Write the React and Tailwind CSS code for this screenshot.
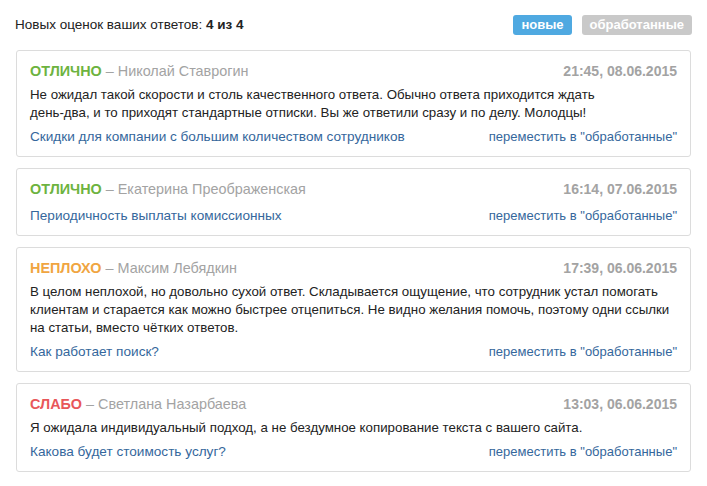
const REVIEWS = [
  {
    id: 1,
    grade: "ОТЛИЧНО",
    gradeClass: "text-[#6db33f]",
    author: "Николай Ставрогин",
    date: "21:45, 08.06.2015",
    text: "Не ожидал такой скорости и столь качественного ответа. Обычно ответа приходится ждать\nдень-два, и то приходят стандартные отписки. Вы же ответили сразу и по делу. Молодцы!",
    question: "Скидки для компании с большим количеством сотрудников",
  },
  {
    id: 2,
    grade: "ОТЛИЧНО",
    gradeClass: "text-[#6db33f]",
    author: "Екатерина Преображенская",
    date: "16:14, 07.06.2015",
    text: null,
    question: "Периодичность выплаты комиссионных",
  },
  {
    id: 3,
    grade: "НЕПЛОХО",
    gradeClass: "text-[#f0a541]",
    author: "Максим Лебядкин",
    date: "17:39, 06.06.2015",
    text: "В целом неплохой, но довольно сухой ответ. Складывается ощущение, что сотрудник устал помогать клиентам и старается как можно быстрее отцепиться. Не видно желания помочь, поэтому одни ссылки на статьи, вместо чётких ответов.",
    question: "Как работает поиск?",
  },
  {
    id: 4,
    grade: "СЛАБО",
    gradeClass: "text-[#e8575a]",
    author: "Светлана Назарбаева",
    date: "13:03, 06.06.2015",
    text: "Я ожидала индивидуальный подход, а не бездумное копирование текста с вашего сайта.",
    question: "Какова будет стоимость услуг?",
  },
];

function ReviewCard({ review }) {
  return (
    <div className="border border-[#dcdcdc] rounded-[3px] bg-white px-[13px] pt-[10px] pb-[10px] mb-[11px]">
      {/* Grade, author and date */}
      <div className="flex items-center justify-between leading-[20px]">
        <p className="text-[14.4px]">
          <span className={`font-bold ${review.gradeClass}`}>{review.grade}</span>
          <span className="text-[#a3a3a3]"> – {review.author}</span>
        </p>
        <span className="text-[14px] font-bold text-[#a3a3a3]">{review.date}</span>
      </div>

      {review.text && (
        <p className="mt-[5px] text-[13.3px] leading-[18px] text-[#222] whitespace-pre-line">
          {review.text}
        </p>
      )}

      {/* Question link + move action */}
      <div
        className={`flex items-center justify-between leading-[19px] text-[#35679c] ${
          review.text ? "mt-[5px]" : "mt-[7px]"
        }`}
      >
        <a href="#" className="text-[13.6px]">{review.question}</a>
        <a href="#" className="text-[13px]">переместить в "обработанные"</a>
      </div>
    </div>
  );
}

export default function App() {
  return (
    <div
      className="w-[707px] min-h-[486px] bg-white px-[16px] pt-[15px]"
      style={{ fontFamily: '"Liberation Sans", Arial, sans-serif' }}
    >
      {/* Header */}
      <div className="flex items-center justify-between h-[20px] mb-[15px] w-[676px]">
        <p className="text-[13.5px] text-[#222] -ml-px">
          Новых оценок ваших ответов: <span className="font-bold">4 из 4</span>
        </p>
        <div className="flex gap-[10px]">
          <span className="h-[20px] px-[8px] rounded-[3px] bg-[#4fa9e1] text-white text-[13px] font-bold leading-[20px]">
            новые
          </span>
          <span className="h-[20px] px-[8px] rounded-[3px] bg-[#c9c9c9] text-white text-[13px] font-bold leading-[20px]">
            обработанные
          </span>
        </div>
      </div>

      <div className="w-[675px]">
        {REVIEWS.map((r) => (
          <ReviewCard key={r.id} review={r} />
        ))}
      </div>
    </div>
  );
}
